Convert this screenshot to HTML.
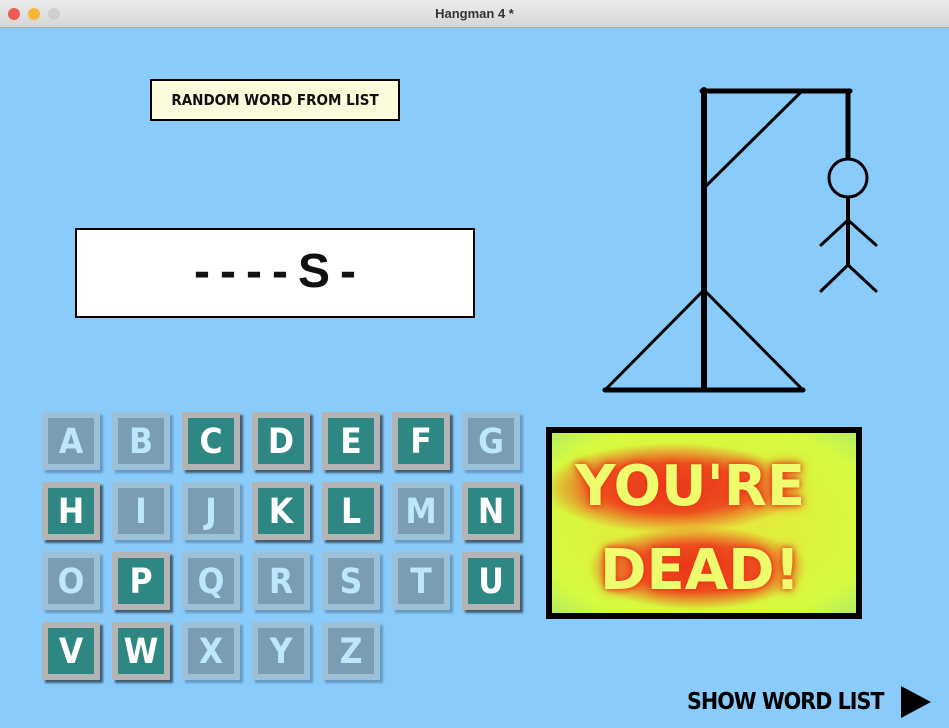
<!DOCTYPE html>
<html><head><meta charset="utf-8"><style>
*{margin:0;padding:0;box-sizing:border-box}
body{width:949px;height:728px;overflow:hidden;background:#89ccfc;font-family:"Liberation Sans",sans-serif;position:relative}
.title{position:absolute;left:0;top:0;width:949px;height:28px;background:linear-gradient(#ececec,#d6d6d6);border-bottom:1px solid #a9a9a9;text-align:center;font:bold 13px/28px "Liberation Sans",sans-serif;color:#333}
.dot{position:absolute;top:8px;width:12px;height:12px;border-radius:50%}
.btn{position:absolute;left:150px;top:79px;width:250px;height:42px;background:#fcfbdc;border:2px solid #000;font:bold 15px/38px "DejaVu Sans Condensed","Liberation Sans",sans-serif;text-align:center;color:#111}
.word{position:absolute;left:75px;top:228px;width:400px;height:90px;background:#fff;border:2px solid #000;text-align:center;font:bold 48px/84px "Liberation Sans",sans-serif;letter-spacing:10px;padding-left:10px;color:#111}
.t{position:absolute;width:58px;height:58px;box-shadow:3px 3px 2px rgba(0,0,0,.55)}
.t span{position:absolute;left:6px;top:6px;width:46px;height:46px;text-align:center;font:bold 35px/48px "DejaVu Sans Condensed","DejaVu Sans",sans-serif}
.on{background:#b4b4b4}.on span{background:#2e8783;color:#fff}
.off{background:#9cc0d8;box-shadow:3px 3px 2px rgba(60,90,120,.45)}.off span{background:#7a9db3;color:#bde6ff}
.dead{position:absolute;left:546px;top:427px;width:316px;height:192px;border:6px solid #000;overflow:hidden;
background:
radial-gradient(ellipse 130px 45px at 120px 55px,#e8301c 0%,#ee5020 55%,rgba(238,120,30,0) 100%),
radial-gradient(ellipse 110px 42px at 145px 135px,#e8301c 0%,#ee5020 55%,rgba(238,120,30,0) 100%),
radial-gradient(ellipse at 50% 50%,#e8e43a,#d6fb40 80%,#b4ee60);}
.dead div{position:absolute;font:bold 56px/60px "DejaVu Sans",sans-serif;color:#eefc6e;white-space:nowrap;text-shadow:0 0 6px #e83018,0 0 12px #ee4a1e}
.sw{position:absolute;left:687px;top:688px;font:bold 23px/28px "DejaVu Sans Condensed","DejaVu Sans",sans-serif;color:#000;letter-spacing:-1px}
</style></head><body>
<div class="title">Hangman 4 *</div>
<div class="dot" style="left:8px;background:#ef5a52"></div>
<div class="dot" style="left:28px;background:#f3b83a"></div>
<div class="dot" style="left:48px;background:#cfcfcf"></div>
<div class="btn">RANDOM WORD FROM LIST</div>
<div class="word">----S-</div>
<svg style="position:absolute;left:0;top:0" width="949" height="728">
<g stroke="#000" fill="none" stroke-linecap="round">
<line x1="605" y1="390" x2="803" y2="390" stroke-width="5"/>
<line x1="704" y1="90" x2="704" y2="388" stroke-width="6"/>
<line x1="702" y1="91" x2="850" y2="91" stroke-width="5"/>
<line x1="848" y1="91" x2="848" y2="158" stroke-width="5"/>
<line x1="706" y1="186" x2="800" y2="93" stroke-width="3"/>
<polyline points="607,388 704,290 801,388" stroke-width="3"/>
<circle cx="848" cy="178" r="19" stroke-width="3"/>
<line x1="848" y1="199" x2="848" y2="265" stroke-width="4"/>
<polyline points="821,245 848,220 876,245" stroke-width="3"/>
<polyline points="821,291 848,265 876,291" stroke-width="3"/>
</g>
<polygon points="901,686 931,702 901,718" fill="#000"/>
</svg>
<div class="t off" style="left:42px;top:412px"><span>A</span></div>
<div class="t off" style="left:112px;top:412px"><span>B</span></div>
<div class="t on" style="left:182px;top:412px"><span>C</span></div>
<div class="t on" style="left:252px;top:412px"><span>D</span></div>
<div class="t on" style="left:322px;top:412px"><span>E</span></div>
<div class="t on" style="left:392px;top:412px"><span>F</span></div>
<div class="t off" style="left:462px;top:412px"><span>G</span></div>
<div class="t on" style="left:42px;top:482px"><span>H</span></div>
<div class="t off" style="left:112px;top:482px"><span>I</span></div>
<div class="t off" style="left:182px;top:482px"><span>J</span></div>
<div class="t on" style="left:252px;top:482px"><span>K</span></div>
<div class="t on" style="left:322px;top:482px"><span>L</span></div>
<div class="t off" style="left:392px;top:482px"><span>M</span></div>
<div class="t on" style="left:462px;top:482px"><span>N</span></div>
<div class="t off" style="left:42px;top:552px"><span>O</span></div>
<div class="t on" style="left:112px;top:552px"><span>P</span></div>
<div class="t off" style="left:182px;top:552px"><span>Q</span></div>
<div class="t off" style="left:252px;top:552px"><span>R</span></div>
<div class="t off" style="left:322px;top:552px"><span>S</span></div>
<div class="t off" style="left:392px;top:552px"><span>T</span></div>
<div class="t on" style="left:462px;top:552px"><span>U</span></div>
<div class="t on" style="left:42px;top:622px"><span>V</span></div>
<div class="t on" style="left:112px;top:622px"><span>W</span></div>
<div class="t off" style="left:182px;top:622px"><span>X</span></div>
<div class="t off" style="left:252px;top:622px"><span>Y</span></div>
<div class="t off" style="left:322px;top:622px"><span>Z</span></div>
<div class="dead"><div style="left:23px;top:24px">YOU'RE</div><div style="left:48px;top:108px">DEAD!</div></div>
<div class="sw">SHOW WORD LIST</div>
</body></html>
